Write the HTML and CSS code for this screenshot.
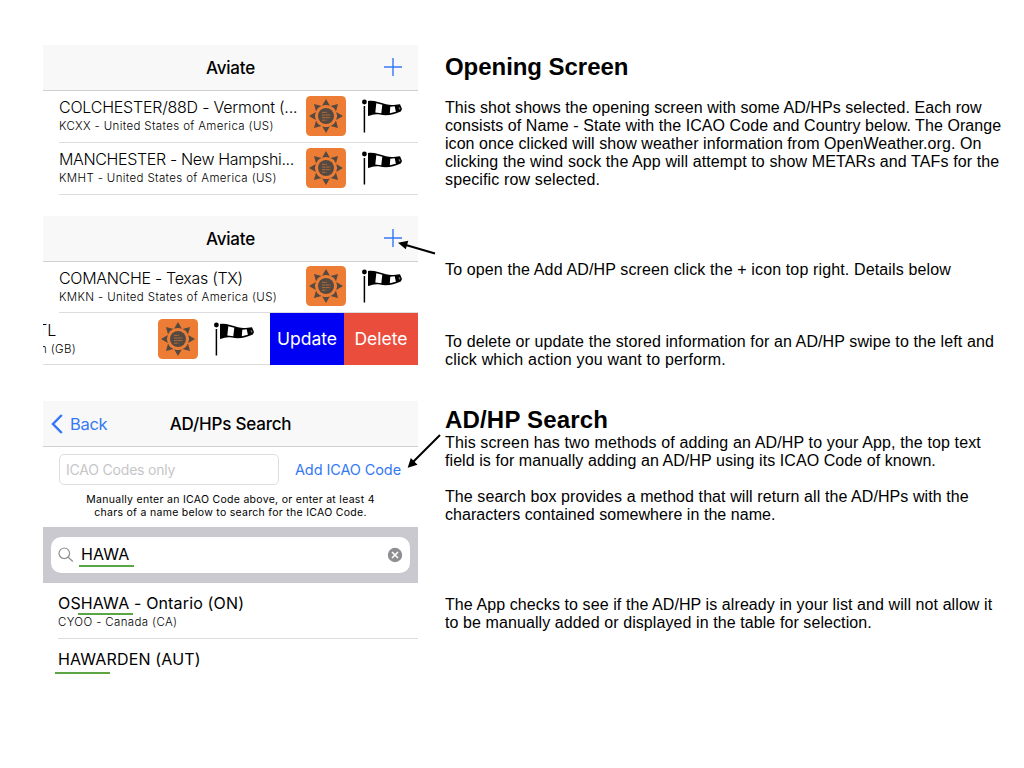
FILE: index.html
```html
<!DOCTYPE html>
<html lang="en">
<head>
<meta charset="utf-8">
<title>Aviate help</title>
<link rel="stylesheet" href="styles.css">
</head>
<body>
<svg class="defs" width="0" height="0">
  <symbol id="sun" viewBox="0 0 40 40">
    <rect width="40" height="40" rx="4.5" fill="#ed7d35"/>
    <g fill="#554a42">
      <circle cx="20" cy="20" r="8"/>
      <path id="ray" d="M20 3L23.900 9.800Q20 8 16.100 9.800Z"/>
      <use href="#ray" transform="rotate(45 20 20)"/>
      <use href="#ray" transform="rotate(90 20 20)"/>
      <use href="#ray" transform="rotate(135 20 20)"/>
      <use href="#ray" transform="rotate(180 20 20)"/>
      <use href="#ray" transform="rotate(225 20 20)"/>
      <use href="#ray" transform="rotate(270 20 20)"/>
      <use href="#ray" transform="rotate(315 20 20)"/>
    </g>
    <path d="M16 16.4h5M16 19h8.5M16 21.6h8.5M16 24.2h4.5" stroke="#b46a3a" stroke-width="1" fill="none" stroke-dasharray="3.6 .4"/>
  </symbol>
  <symbol id="sock" viewBox="0 0 44 40">
    <circle cx="4.4" cy="6" r="2.4"/>
    <path d="M4.400 10V36.500" stroke="#000" stroke-width="1.500"/>
    <path d="M8 5C14 4 19 6.400 26 8.300C32 9.900 35 8.600 40 8.200L42 13L40.800 15.500C34 18.400 27 20.300 20 18.600C15.500 17.600 12 19 8 20Z"/>
    <path d="M16.300 7.300L22.300 8.800L21.300 17.200L15.300 16.600ZM30.300 10.700L34.700 10.300L35.900 15.800L29.800 17.300Z" fill="#fff"/>
    <path d="M38.500 11.500l1.300-.3.700 1.700-1.200.8Z" fill="#777"/>
  </symbol>
</svg>
<main class="page">
  <div class="screens">
    <section class="screen">
      <header class="nav"><h2>Aviate</h2><svg class="plus" viewBox="0 0 18 18"><path d="M9 0V18M0 9H18"/></svg></header>
      <div class="row">
        <div class="info"><p class="name n1">COLCHESTER/88D - Vermont (...</p><p class="code">KCXX - United States of America (US)</p></div>
        <svg class="sun"><use href="#sun"/></svg><svg class="sock"><use href="#sock"/></svg>
      </div>
      <div class="row">
        <div class="info"><p class="name n2">MANCHESTER - New Hampshi...</p><p class="code">KMHT - United States of America (US)</p></div>
        <svg class="sun"><use href="#sun"/></svg><svg class="sock"><use href="#sock"/></svg>
      </div>
    </section>
    <section class="screen second">
      <header class="nav"><h2>Aviate</h2><svg class="plus" viewBox="0 0 18 18"><path d="M9 0V18M0 9H18"/></svg></header>
      <div class="row first">
        <div class="info"><p class="name n3">COMANCHE - Texas (TX)</p><p class="code">KMKN - United States of America (US)</p></div>
        <svg class="sun"><use href="#sun"/></svg><svg class="sock"><use href="#sock"/></svg>
      </div>
      <div class="row swiped">
        <div class="info"><p class="name">TL</p><p class="code">n (GB)</p></div>
        <svg class="sun"><use href="#sun"/></svg><svg class="sock"><use href="#sock"/></svg>
        <span class="action update">Update</span><span class="action delete">Delete</span>
      </div>
    </section>
    <section class="screen third">
      <header class="nav">
        <span class="back"><svg width="12" height="20" viewBox="0 0 12 20"><path d="M10.800 1L2 10L10.800 19"/></svg>Back</span>
        <h2 class="search-title">AD/HPs Search</h2>
      </header>
      <div class="form"><span class="field">ICAO Codes only</span><span class="add">Add ICAO Code</span></div>
      <p class="hint">Manually enter an ICAO Code above, or enter at least 4<br>chars of a name below to search for the ICAO Code.</p>
      <div class="searchbar"><div class="searchbox">
        <svg class="glass" width="16" height="16" viewBox="0 0 16 16"><circle cx="6.300" cy="6.300" r="5.300"/><path d="M10.200 10.200L14.800 14.500"/></svg>
        <span class="query">HAWA<i class="mark"></i></span>
        <svg class="clear" width="16" height="16" viewBox="0 0 16 16"><circle cx="8" cy="8" r="8"/><path d="M5 5L11 11M11 5L5 11"/></svg>
      </div></div>
      <div class="result"><p class="name">OSHAWA - Ontario (ON)<i class="mark"></i></p><p class="code">CYOO - Canada (CA)</p></div>
      <div class="result last"><p class="name">HAWARDEN (AUT)<i class="mark"></i></p></div>
    </section>
  </div>
  <div class="notes">
    <h1>Opening Screen</h1>
    <p class="intro"><span class="t2">This shot shows the opening screen with some AD/HPs selected. Each row</span><br><span class="t2">consists of Name - State with the ICAO Code and Country below. The Orange</span><br><span class="t1">icon once clicked will show weather information from OpenWeather.org. On</span><br><span class="t4">clicking the wind sock the App will attempt to show METARs and TAFs for the</span><br><span class="t5">specific row selected.</span></p>
    <p class="open"><span class="t5">To open the Add AD/HP screen click the + icon top right. Details below</span></p>
    <p class="swipe"><span class="t4">To delete or update the stored information for an AD/HP swipe to the left and</span><br><span class="t6">click which action you want to perform.</span></p>
    <h1 class="find">AD/HP Search</h1>
    <p><span class="t5">This screen has two methods of adding an AD/HP to your App, the top text</span><br><span class="t2">field is for manually adding an AD/HP using its ICAO Code of known.</span></p>
    <p class="box"><span class="t3">The search box provides a method that will return all the AD/HPs with the</span><br><span class="t1">characters contained somewhere in the name.</span></p>
    <p class="checks"><span class="t3">The App checks to see if the AD/HP is already in your list and will not allow it</span><br><span class="t3">to be manually added or displayed in the table for selection.</span></p>
  </div>
  <svg class="arrows" viewBox="0 0 1024 768"><path d="M435 253.500L405 244.800M440 435L412 463" stroke="#000" stroke-width="2"/><path d="M398 242.700L408.300 240.700L405.800 249.300ZM407.700 467.700L410.800 458L417.500 464.700Z"/></svg>
</main>
</body>
</html>
```
FILE: styles.css
```css
* { box-sizing: border-box; }
body { margin: 0; background: #fff; color: #000; }
h1, h2, p { margin: 0; }
.defs { position: absolute; }
.page { position: relative; width: 1024px; height: 768px; overflow: hidden; padding: 45px 0 0 43px; display: grid; grid-template-columns: 375px 560px; column-gap: 27px; }
.screen { width: 375px; overflow: hidden; font-family: Inter, "Liberation Sans", sans-serif; }
.second { margin-top: 21px; }
.third { margin-top: 36px; }
.nav { height: 46px; background: #f8f8f8; border-bottom: 1px solid #d0d0d2; display: grid; grid-template-columns: 90px 1fr 90px; align-items: center; }
.nav h2 { grid-column: 2; text-align: center; font-size: 17px; line-height: 22px; font-weight: 500; letter-spacing: -0.2px; white-space: nowrap; }
.plus { width: 18px; height: 18px; justify-self: end; margin: -1px 16px 0 0; stroke: #3478f6; stroke-width: 1.4; }
.row { height: 52px; padding: 0 0 2px 16px; display: flex; align-items: center; background: linear-gradient(#dcdce0, #dcdce0) 16px 100% / 100% 1px no-repeat; }
.second .row { height: 51px; }
.second .first { padding-bottom: 3px; }
.second .first .info { padding-bottom: 0; }
.second .swiped { height: 52px; }
.info { width: 247px; flex: none; white-space: nowrap; padding-bottom: 1px; }
.name { font-size: 16px; line-height: 20px; font-weight: 300; position: relative; white-space: nowrap; }
.n1 { letter-spacing: -0.22px; }
.n2 { letter-spacing: -0.35px; }
.n3 { letter-spacing: -0.3px; }
.code { font-size: 11.500px; line-height: 16px; font-weight: 300; letter-spacing: 0.36px; margin-top: 1px; white-space: nowrap; }
.sun { width: 40px; height: 40px; flex: none; }
.sock { width: 44px; height: 40px; flex: none; margin-left: 14px; }
.swiped { padding: 0; background-position: 0 100%; }
.swiped .info { width: 115px; overflow: hidden; }
.swiped .name { text-indent: -6px; }
.swiped .code { text-indent: -3px; }
.swiped .sock { margin-right: 14px; }
.action { width: 74px; flex: none; align-self: stretch; display: flex; align-items: center; justify-content: center; color: #fff; font-size: 17.500px; padding-bottom: 1px; }
.update { background: #0000f5; }
.delete { background: #eb4d3d; }
.back { display: flex; align-items: center; gap: 7px; padding-left: 8px; font-size: 16.500px; letter-spacing: -0.3px; color: #3478f6; }
.back svg { fill: none; stroke: #3478f6; stroke-width: 2.500; flex: none; }
.form { height: 38px; padding: 7px 17px 0 16px; display: flex; justify-content: space-between; align-items: center; }
.field { width: 220px; height: 31px; border: 1px solid #dedede; border-radius: 5px; padding-left: 6px; font-size: 14px; line-height: 29px; letter-spacing: -0.2px; color: #c6c6c9; }
.add { font-size: 14.500px; letter-spacing: -0.1px; color: #3478f6; white-space: nowrap; }
.hint { margin-top: 8px; height: 34px; font-size: 10.500px; line-height: 13px; letter-spacing: 0.29px; text-align: center; white-space: nowrap; }
.searchbar { height: 56px; background: #c9c9cf; padding: 10px 8px; }
.searchbox { height: 36px; border-radius: 10px; background: #fff; display: flex; align-items: center; padding: 0 7px; }
.glass { fill: none; stroke: #8e8e93; stroke-width: 1.200; }
.query { position: relative; top: -1px; margin-left: 7px; font-size: 16px; line-height: 20px; flex: 1; font-weight: 400; letter-spacing: 0.1px; }
.clear { fill: #8e8e93; stroke: #fff; stroke-width: 1.600; }
.mark { position: absolute; left: -2px; top: 21px; width: 55px; height: 2px; background: #5ba545; }
.result { height: 56px; padding: 10px 0 0 15px; background: linear-gradient(#dcdce0, #dcdce0) 15px 100% / 100% 1px no-repeat; }
.result .name { font-weight: 400; letter-spacing: 0.15px; }
.result .mark { left: 20px; top: 20px; }
.last { background: none; }
.last .mark { left: -3px; top: 23px; }
.notes { font-family: "Liberation Sans", Arial, sans-serif; font-size: 16px; line-height: 18px; white-space: nowrap; }
.notes h1 { font-size: 24px; line-height: 28px; margin-top: 8px; font-weight: 700; letter-spacing: -0.05px; }
.intro { margin-top: 18px; }
.open { margin-top: 72px; }
.swipe { margin-top: 54px; }
.notes .find { margin-top: 37px; letter-spacing: 0.18px; }
.box { margin-top: 18px; }
.checks { margin-top: 72px; }
.t1 { letter-spacing: 0.055px; }
.t2 { letter-spacing: 0.07px; }
.t3 { letter-spacing: 0.085px; }
.t4 { letter-spacing: 0.11px; }
.t5 { letter-spacing: 0.135px; }
.t6 { letter-spacing: 0.18px; }
.arrows { position: absolute; left: 0; top: 0; width: 1024px; height: 768px; pointer-events: none; }
```
